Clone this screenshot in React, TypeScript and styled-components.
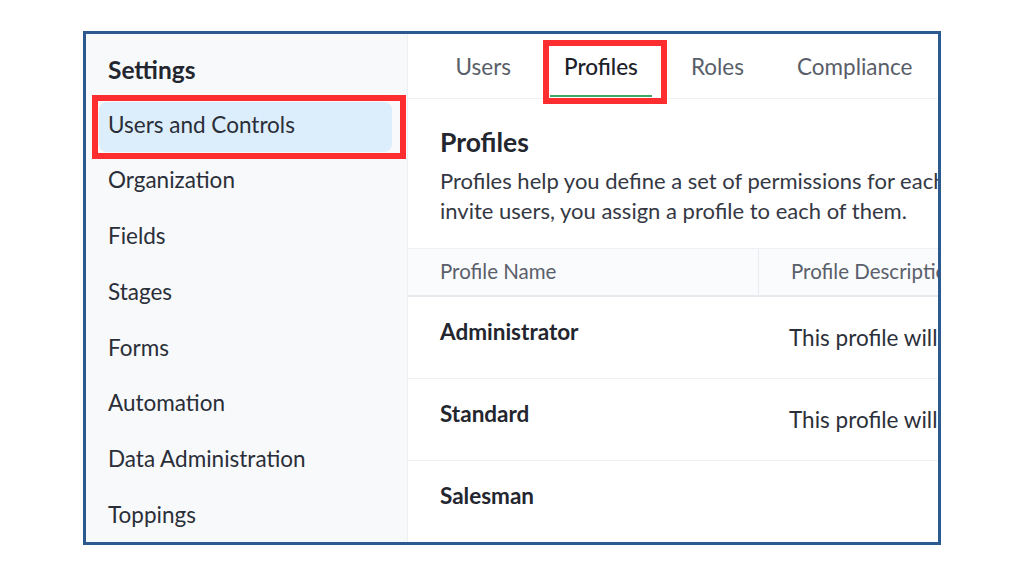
import React from 'react';
import styled, {createGlobalStyle} from 'styled-components';

const GlobalStyle = createGlobalStyle`
  html, body {
    margin: 0;
    padding: 0;
    background: #ffffff;
  }
  body {
    font-family: 'Lato', 'Open Sans', 'Liberation Sans', sans-serif;
    color: #262a33;
  }
`;

const menuItems = [
    'Users and Controls',
    'Organization',
    'Fields',
    'Stages',
    'Forms',
    'Automation',
    'Data Administration',
    'Toppings',
];

const tabs = ['Users', 'Profiles', 'Roles', 'Compliance'];

const profiles = [
    {name: 'Administrator', desc: 'This profile will have all the permissions.'},
    {name: 'Standard', desc: 'This profile will have all the permissions except administrative privileges.'},
    {name: 'Salesman', desc: ''},
];

const App: React.FC = () => {
    return (
        <Page>
            <GlobalStyle/>
            <Frame>
                <Sidebar>
                    <SideTitle>Settings</SideTitle>
                    <Menu>
                        {menuItems.map((item, i) => (
                            <MenuItem key={item} active={i === 0}>
                                {item}
                                {i === 0 && <MenuMark/>}
                            </MenuItem>
                        ))}
                    </Menu>
                </Sidebar>
                <Main>
                    <TabBar>
                        {tabs.map(t => (
                            <Tab key={t} active={t === 'Profiles'}>
                                {t}
                                {t === 'Profiles' && <TabMark/>}
                            </Tab>
                        ))}
                    </TabBar>
                    <Intro>
                        <Heading>Profiles</Heading>
                        <Desc>
                            Profiles help you define a set of permissions for each user. When you<br/>
                            invite users, you assign a profile to each of them.
                        </Desc>
                    </Intro>
                    <Table>
                        <HeadRow>
                            <HeadCell divider>Profile Name</HeadCell>
                            <HeadCell>Profile Description</HeadCell>
                        </HeadRow>
                        {profiles.map(p => (
                            <Row key={p.name}>
                                <NameCell>{p.name}</NameCell>
                                <DescCell>{p.desc}</DescCell>
                            </Row>
                        ))}
                    </Table>
                </Main>
            </Frame>
        </Page>
    );
};

export default App;

const Page = styled.div`
  width: 1024px;
  height: 576px;
  padding: 31px 0 0 83px;
  box-sizing: border-box;
  overflow: hidden;
`;

const Frame = styled.div`
  width: 858px;
  height: 514px;
  box-sizing: border-box;
  border: 3px solid #2c5a8f;
  display: flex;
  overflow: hidden;
  background: #ffffff;
`;

const Sidebar = styled.div`
  width: 322px;
  flex-shrink: 0;
  background: #f8f9fb;
  border-right: 1px solid #eceff3;
  box-sizing: border-box;
  padding-top: 22px;
`;

const SideTitle = styled.div`
  font-size: 24.5px;
  font-weight: 700;
  line-height: 28px;
  padding-left: 22px;
  margin-bottom: 18px;
  color: #23262e;
`;

const Menu = styled.div`
  display: flex;
  flex-direction: column;
  gap: 5.8px;
`;

const MenuItem = styled.div<{active?: boolean}>`
  position: relative;
  height: 50px;
  width: 293px;
  margin-left: 13px;
  padding-left: 9px;
  box-sizing: border-box;
  display: flex;
  align-items: center;
  padding-bottom: 6px;
  font-size: 22.5px;
  color: #2a2e38;
  border-radius: 8px;
  background: ${p => (p.active ? '#dcedfb' : 'transparent')};
`;

const MenuMark = styled.span`
  position: absolute;
  left: -7px;
  top: -7px;
  right: -14px;
  bottom: -7px;
  border: 6px solid #fe2d2f;
`;

const Main = styled.div`
  flex: 1;
  min-width: 0;
  overflow: hidden;
  display: flex;
  flex-direction: column;
`;

const TabBar = styled.div`
  height: 65px;
  flex-shrink: 0;
  box-sizing: border-box;
  border-bottom: 1px solid #eef0f4;
  display: flex;
  padding-left: 21px;
  white-space: nowrap;
`;

const Tab = styled.div<{active?: boolean}>`
  position: relative;
  display: flex;
  align-items: center;
  padding: 3px 14px 0;
  margin: 0 12.5px 1px;
  font-size: 22.5px;
  font-weight: ${p => (p.active ? 500 : 400)};
  color: ${p => (p.active ? '#1c2029' : '#595e69')};
  border-bottom: 2px solid ${p => (p.active ? '#3fa866' : 'transparent')};
`;

const TabMark = styled.span`
  position: absolute;
  left: -7px;
  right: -15px;
  top: 6px;
  bottom: -9px;
  border: 6px solid #fe2d2f;
`;

const Intro = styled.div`
  padding: 29px 0 0 32px;
  white-space: nowrap;
`;

const Heading = styled.div`
  font-size: 26.5px;
  font-weight: 700;
  line-height: 28px;
  color: #23262e;
`;

const Desc = styled.div`
  margin-top: 10px;
  font-size: 22px;
  line-height: 30px;
  color: #343843;
`;

const Table = styled.div`
  margin-top: 22px;
  width: 1000px;
`;

const HeadRow = styled.div`
  display: flex;
  height: 46px;
  background: #fafbfc;
  border-top: 1px solid #eef1f4;
  border-bottom: 2px solid #e6eaef;
`;

const HeadCell = styled.div<{divider?: boolean}>`
  width: ${p => (p.divider ? '351px' : 'auto')};
  flex: ${p => (p.divider ? '0 0 auto' : '1')};
  box-sizing: border-box;
  display: flex;
  align-items: center;
  padding-left: 32px;
  padding-bottom: 2px;
  font-size: 20.5px;
  color: #5a5f6b;
  white-space: nowrap;
  border-right: ${p => (p.divider ? '1px solid #e8ecf0' : 'none')};
`;

const Row = styled.div`
  display: flex;
  height: 82px;
  box-sizing: border-box;
  border-bottom: 1px solid #eef1f4;
`;

const NameCell = styled.div`
  width: 351px;
  flex-shrink: 0;
  box-sizing: border-box;
  padding: 22px 0 0 32px;
  font-size: 22.5px;
  font-weight: 700;
  line-height: 26px;
  color: #23262e;
`;

const DescCell = styled.div`
  flex: 1;
  padding: 28px 0 0 30px;
  font-size: 22.5px;
  line-height: 26px;
  color: #2b2f39;
  white-space: nowrap;
`;
